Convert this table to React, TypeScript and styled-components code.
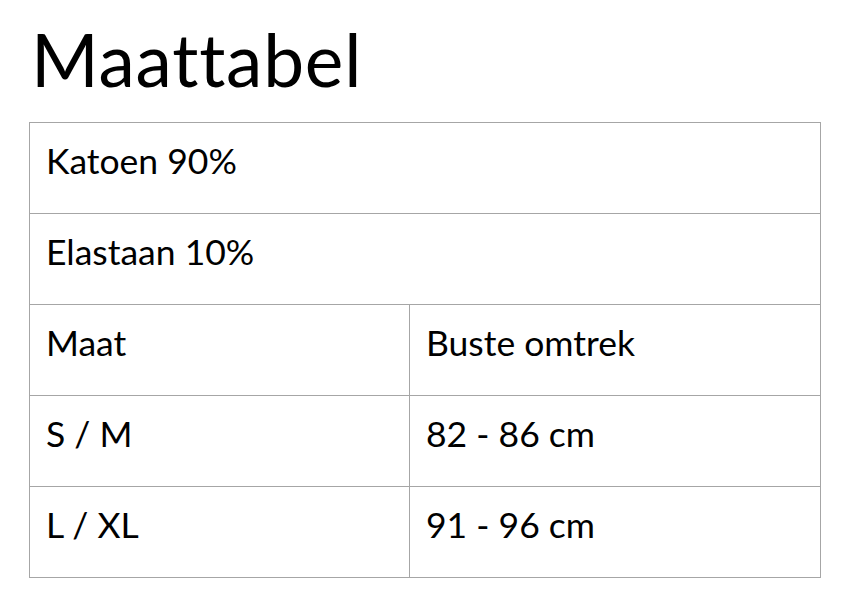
import styled, { createGlobalStyle } from "styled-components";

const GlobalStyle = createGlobalStyle`
  html, body {
    margin: 0;
    padding: 0;
    background: #fff;
  }
  body {
    font-family: "Lato", "Open Sans", sans-serif;
    color: #000;
  }
`;

const rows: { size: string; bust: string }[] = [
  { size: "S / M", bust: "82 - 86 cm" },
  { size: "L / XL", bust: "91 - 96 cm" },
];

const App: React.FC = () => {
  return (
    <Page>
      <GlobalStyle />
      <Title>Maattabel</Title>
      <SizeTable>
        <colgroup>
          <col style={{ width: 380 }} />
          <col />
        </colgroup>
        <tbody>
          <tr>
            <Cell colSpan={2}>Katoen 90%</Cell>
          </tr>
          <tr>
            <Cell colSpan={2}>Elastaan 10%</Cell>
          </tr>
          <tr>
            <Cell>Maat</Cell>
            <Cell>Buste omtrek</Cell>
          </tr>
          {rows.map((r) => (
            <tr key={r.size}>
              <Cell>{r.size}</Cell>
              <Cell>{r.bust}</Cell>
            </tr>
          ))}
        </tbody>
      </SizeTable>
    </Page>
  );
};

export default App;

const Page = styled.div`
  padding: 18px 0 0 29px;
  width: 792px;
`;

const Title = styled.h1`
  margin: 0 0 22px 2px;
  font-family: "Lato", "Open Sans", sans-serif;
  font-weight: 400;
  font-size: 73px;
  line-height: 82px;
  letter-spacing: 0.8px;
`;

const SizeTable = styled.table`
  width: 792px;
  border-collapse: collapse;
  table-layout: fixed;
`;

const Cell = styled.td`
  height: 91px;
  padding: 0 16px 14px 16px;
  border: 1px solid #a6a6a6;
  font-family: "Lato", "Open Sans", sans-serif;
  font-size: 35.5px;
  line-height: 1;
  vertical-align: middle;
  box-sizing: border-box;
`;
